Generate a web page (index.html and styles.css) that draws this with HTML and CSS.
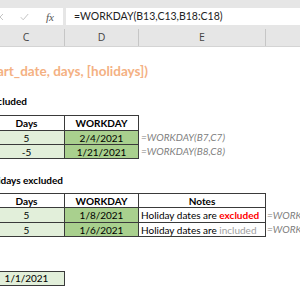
FILE: index.html
```html
<!DOCTYPE html>
<html>
<head>
<meta charset="utf-8">
<link rel="stylesheet" href="styles.css">
</head>
<body>
<div class="chrome">
  <div class="fbar">
    <div class="fbtns">
      <svg class="ic-x" width="8" height="8" viewBox="0 0 8 8"><path d="M1 1L7 7M7 1L1 7" stroke="#c4c4c4" stroke-width="1" fill="none"/></svg>
      <svg class="ic-check" width="9" height="8" viewBox="0 0 9 8"><path d="M0.8 4.2L3.2 6.8L8.2 1" stroke="#c4c4c4" stroke-width="1" fill="none"/></svg>
      <span class="fx">fx</span>
    </div>
    <div class="finput">=WORKDAY(B13,C13,B18:C18)</div>
  </div>
  <div class="colhdr">
    <div class="ch col-c">C</div>
    <div class="ch col-d">D</div>
    <div class="ch col-e">E</div>
    <div class="ch col-f"></div>
  </div>
</div>
<div class="sheet">
  <div class="title"><span>=WORKDAY(start_date, days, [holidays])</span></div>
  <div class="sec sec1"><span>Holidays not included</span></div>
  <div class="tbl t1">
    <div class="grid g1">
      <div class="cell hd">Days</div>
      <div class="cell hd">WORKDAY</div>
      <div class="cell lg">5</div>
      <div class="cell dg">2/4/2021</div>
      <div class="cell lg">-5</div>
      <div class="cell dg">1/21/2021</div>
    </div>
    <div class="fcol f1">
      <div>=WORKDAY(B7,C7)</div>
      <div>=WORKDAY(B8,C8)</div>
    </div>
  </div>
  <div class="sec sec2"><span>Holidays excluded</span></div>
  <div class="tbl t2">
    <div class="grid g2">
      <div class="cell hd">Days</div>
      <div class="cell hd">WORKDAY</div>
      <div class="cell hd">Notes</div>
      <div class="cell lg">5</div>
      <div class="cell dg">1/8/2021</div>
      <div class="cell note">Holiday dates are&nbsp;<b class="red">excluded</b></div>
      <div class="cell lg">5</div>
      <div class="cell dg">1/6/2021</div>
      <div class="cell note">Holiday dates are&nbsp;<span class="grey">included</span></div>
    </div>
    <div class="fcol f2">
      <div>=WORKDAY(B12,C12,B18:C18)</div>
      <div>=WORKDAY(B13,C13,B18:C18)</div>
    </div>
  </div>
  <div class="hcell">1/1/2021</div>
</div>
</body>
</html>
```
FILE: styles.css
```css
* { box-sizing: border-box; }
html, body { margin: 0; padding: 0; }
body {
  width: 300px;
  height: 300px;
  overflow: hidden;
  background: #fff;
  font-family: Lato, "Liberation Sans", sans-serif;
  color: #000;
}
.chrome {
  background: #e6e6e6;
  height: 47px;
  padding-top: 8px;
}
.fbar {
  display: flex;
  height: 17px;
  gap: 3px;
}
.fbtns {
  width: 63px;
  background: #fff;
  display: flex;
  align-items: center;
}
.ic-x { margin-left: -4px; flex: none; }
.ic-check { margin-left: 16px; flex: none; }
.fx {
  margin-left: 17px;
  font-family: "Liberation Serif", serif;
  font-style: italic;
  font-size: 11px;
  color: #555;
}
.finput {
  flex: 1;
  background: #fff;
  padding-left: 8px;
  font-family: Lato, sans-serif;
  font-size: 10.5px;
  line-height: 17px;
  color: #222;
  white-space: nowrap;
}
.colhdr {
  margin-top: 4px;
  height: 18px;
  display: flex;
  margin-left: -12px;
  border-bottom: 1px solid #d4d4d4;
}
.ch {
  border-right: 1px solid #c6c6c6;
  text-align: center;
  font-family: "Open Sans", sans-serif;
  font-size: 10.5px;
  line-height: 17px;
  color: #444;
  flex: none;
}
.col-c { width: 77px; }
.col-d { width: 74px; }
.col-e { width: 127px; }
.col-f { width: 60px; }
.sheet { display: flex; flex-direction: column; }
.title {
  margin-top: 14px;
  height: 20px;
  width: 148px;
  display: flex;
  justify-content: flex-end;
  white-space: nowrap;
  font-weight: bold;
  font-size: 13.5px;
  line-height: 20px;
  color: #f4b183;
}
.sec {
  height: 16px;
  line-height: 16px;
  font-weight: bold;
  font-size: 10px;
  display: flex;
  justify-content: flex-end;
  white-space: nowrap;
}
.sec1 { margin-top: 12px; width: 27px; }
.sec2 { margin-top: 13px; width: 63px; }
.tbl { display: flex; }
.t1 { margin-top: 6px; }
.t2 { margin-top: 5px; }
.grid {
  display: grid;
  gap: 1px;
  padding: 1px;
  background: #3a3a3a;
  margin-left: -12px;
}
.g1 { grid-template-columns: 75px 73px; grid-template-rows: 14px 13px 13px; }
.g2 { grid-template-columns: 75px 73px 126px; grid-template-rows: 13px 14px 13px; }
.cell {
  background: #fff;
  display: flex;
  align-items: center;
  justify-content: center;
  font-size: 10px;
  white-space: nowrap;
  overflow: hidden;
}
.hd { font-weight: bold; }
.lg { background: #e2efda; }
.dg { background: #a9d08e; }
.note { justify-content: flex-start; padding-left: 2px; }
.red { color: #ff0000; font-weight: bold; }
.grey { color: #a0a0a0; }
.fcol {
  display: flex;
  flex-direction: column;
  gap: 1px;
  white-space: nowrap;
}
.fcol div {
  font-style: italic;
  color: #808080;
  font-size: 10px;
}
.f1 { padding-top: 16px; padding-left: 2px; }
.f1 div { height: 13px; line-height: 13px; }
.f2 { padding-top: 15px; padding-left: 1px; }
.f2 div:first-child { height: 14px; line-height: 14px; }
.f2 div:last-child { height: 13px; line-height: 13px; }
.hcell {
  margin-top: 34px;
  margin-left: -12px;
  width: 77px;
  height: 15px;
  border: 1px solid #3a3a3a;
  background: #e2efda;
  font-size: 10px;
  line-height: 13px;
  text-align: center;
}
```
